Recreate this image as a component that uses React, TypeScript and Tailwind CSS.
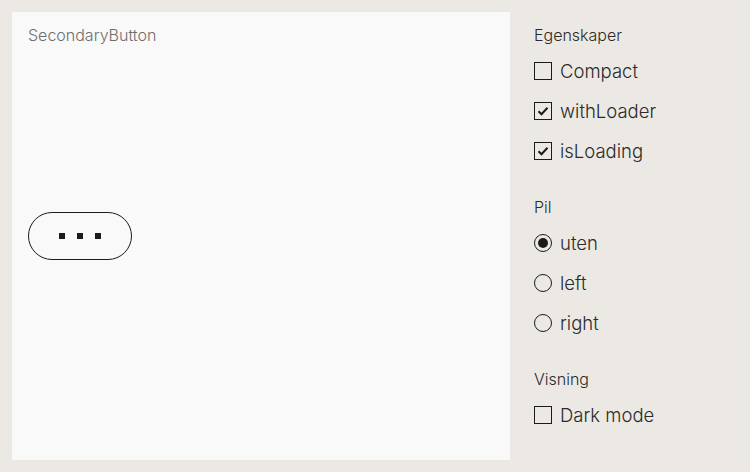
import React from "react";

function Check({ checked, label }: { checked: boolean; label: string }) {
  return (
    <div className="flex h-[40px] items-center gap-[8px]">
      <div className="flex h-[18px] w-[18px] items-center justify-center border-[1.5px] border-[#1b1b1b]">
        {checked && (
          <svg width="12" height="12" viewBox="0 0 12 12">
            <path d="M1.5 6.2 L4.5 9.2 L10.5 2.8" fill="none" stroke="#1b1b1b" strokeWidth="2" />
          </svg>
        )}
      </div>
      <span className="text-[18.5px] font-light leading-none text-[#2b2b2b]">{label}</span>
    </div>
  );
}

function Radio({ checked, label }: { checked: boolean; label: string }) {
  return (
    <div className="flex h-[40px] items-center gap-[8px]">
      <div className="flex h-[18px] w-[18px] items-center justify-center rounded-full border-[1.5px] border-[#1b1b1b]">
        {checked && <div className="h-[10px] w-[10px] rounded-full bg-[#1b1b1b]" />}
      </div>
      <span className="text-[18.5px] font-light leading-none text-[#2b2b2b]">{label}</span>
    </div>
  );
}

function Heading({ children }: { children: React.ReactNode }) {
  return <div className="h-[24px] text-[16px] font-light leading-[24px] text-[#2b2b2b]">{children}</div>;
}

export default function App() {
  return (
    <div
      className="flex h-[472px] w-[750px] bg-[#ece9e4]"
      style={{ fontFamily: "Inter, 'Liberation Sans', sans-serif" }}
    >
      <div className="ml-[12px] mt-[12px] flex h-[448px] w-[498px] flex-col bg-[#f9f9f9] px-[16px]">
        <div className="mt-[11px] h-[24px] text-[16px] font-light leading-[24px] text-[#6e6e6e]">SecondaryButton</div>
        <div className="flex flex-1 items-center pb-[32px]">
          <div className="-mt-[3px] flex h-[48px] w-[104px] items-center justify-center gap-[12px] rounded-full border border-[#1b1b1b]">
            <div className="h-[6px] w-[6px] bg-[#1b1b1b]" />
            <div className="h-[6px] w-[6px] bg-[#1b1b1b]" />
            <div className="h-[6px] w-[6px] bg-[#1b1b1b]" />
          </div>
        </div>
      </div>
      <div className="ml-[24px] flex flex-col pt-[23px]">
        <Heading>Egenskaper</Heading>
        <div className="mt-[4px]">
          <Check checked={false} label="Compact" />
          <Check checked={true} label="withLoader" />
          <Check checked={true} label="isLoading" />
        </div>
        <div className="mt-[24px]">
          <Heading>Pil</Heading>
        </div>
        <div className="mt-[4px]">
          <Radio checked={true} label="uten" />
          <Radio checked={false} label="left" />
          <Radio checked={false} label="right" />
        </div>
        <div className="mt-[24px]">
          <Heading>Visning</Heading>
        </div>
        <div className="mt-[4px]">
          <Check checked={false} label="Dark mode" />
        </div>
      </div>
    </div>
  );
}
